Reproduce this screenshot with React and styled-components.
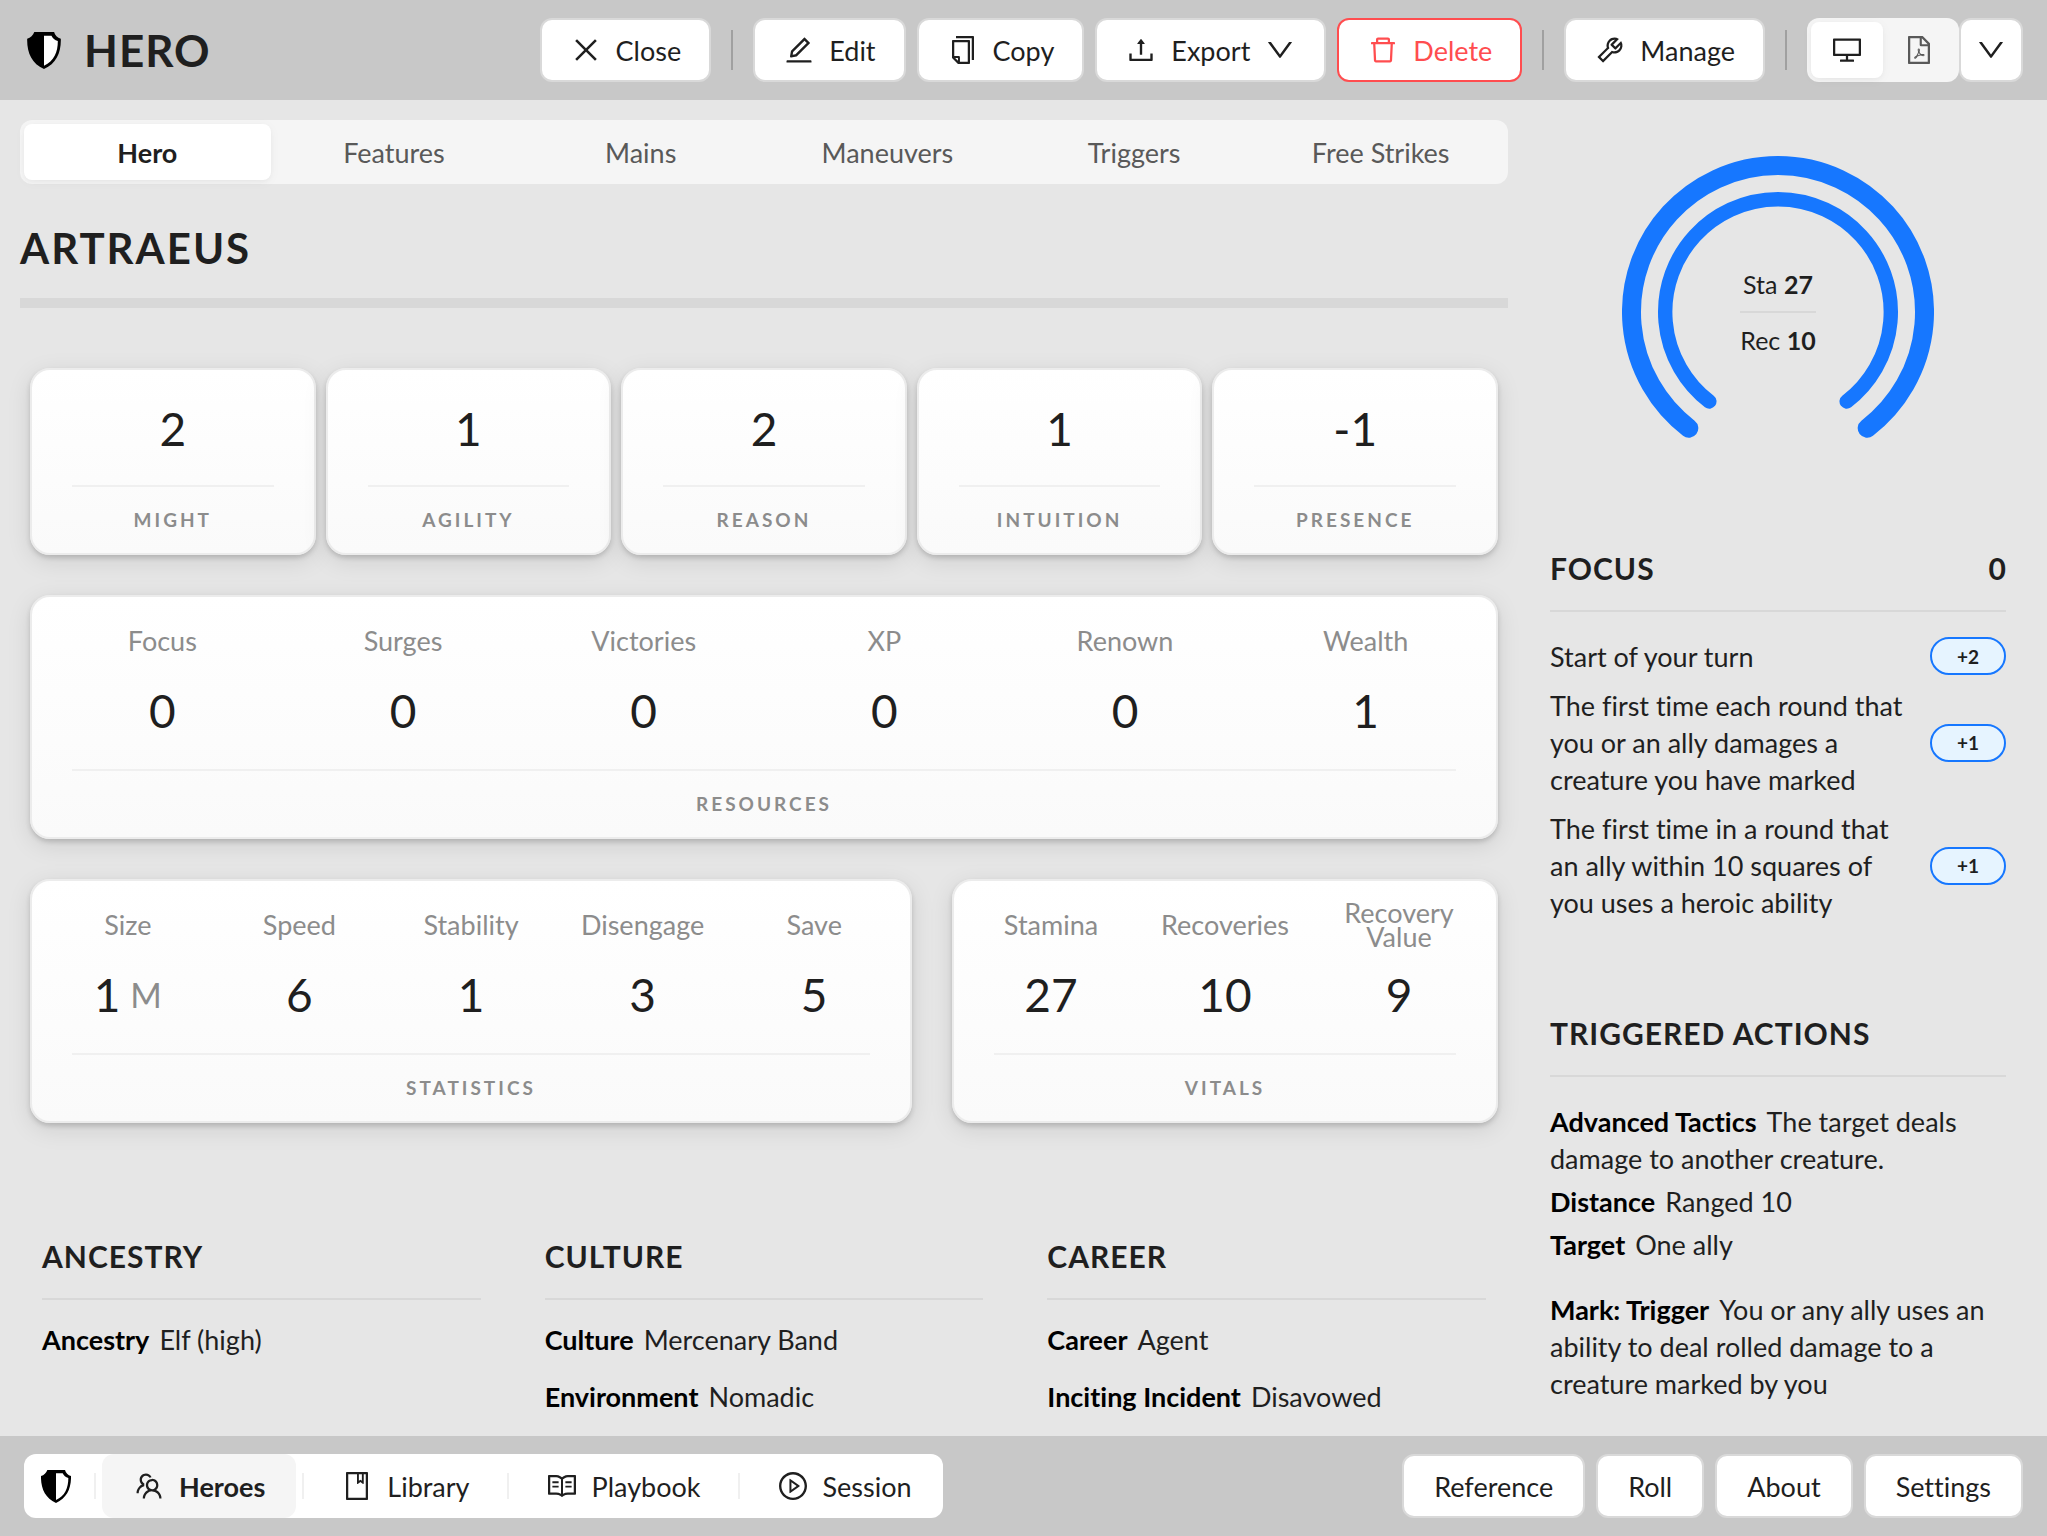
import React, { useState } from "react";
import styled, { createGlobalStyle, css } from "styled-components";
import {
  AiOutlineBook,
  AiOutlineClose,
  AiOutlineCopy,
  AiOutlineDelete,
  AiOutlineDesktop,
  AiOutlineDown,
  AiOutlineEdit,
  AiOutlineFilePdf,
  AiOutlinePlayCircle,
  AiOutlineRead,
  AiOutlineTeam,
  AiOutlineTool,
  AiOutlineUpload,
} from "react-icons/ai";

const ink = "#1f1f1f";
const muted = "#8c8c8c";
const rule = "#d8d8d8";
const accent = "#1677ff";
const danger = "#ff4d4f";

const GlobalStyle = createGlobalStyle`
  *, *::before, *::after { box-sizing: border-box; }
  body {
    margin: 0;
    background: #e6e6e6;
    color: ${ink};
    font: 400 27px/37px Lato, "Open Sans", sans-serif;
    font-variant-ligatures: none;
  }
  button {
    font: inherit;
    font-variant-ligatures: none;
    color: inherit;
    cursor: pointer;
    margin: 0;
  }
  h1, h2, h3, p, dl, dd, ul { margin: 0; padding: 0; }
  svg { display: block; flex: none; }
  button > svg[fill="currentColor"] { width: 32px; height: 32px; }
`;

const Page = styled.div`
  display: flex;
  flex-direction: column;
  height: 100vh;
`;

const Bar = styled.header`
  flex: none;
  display: flex;
  align-items: center;
  justify-content: space-between;
  height: 100px;
  padding: 0 24px;
  background: #c8c8c8;
`;

const Brand = styled.div`
  display: flex;
  align-items: center;
  gap: 23px;
  padding-left: 3px;
`;

const BrandTitle = styled.h1`
  font-size: 44px;
  line-height: 64px;
  font-weight: 700;
  letter-spacing: 1px;
`;

const Tools = styled.div`
  display: flex;
  align-items: center;
  gap: 11px;
`;

const buttonPadding = { icon: 28, text: 30, compact: 14 };

const Button = styled.button`
  display: flex;
  align-items: center;
  justify-content: center;
  gap: 14px;
  height: 64px;
  padding: 0 ${(p) => buttonPadding[p.$kind || "icon"]}px;
  border: 2px solid ${(p) => (p.$danger ? danger : "#d9d9d9")};
  border-radius: 12px;
  background: #fff;
  color: ${(p) => (p.$danger ? danger : ink)};
`;

const ToolDivider = styled.span`
  width: 2px;
  height: 40px;
  margin: 0 9px;
  background: #a0a0a0;
`;

const ViewSwitch = styled.div`
  display: flex;
  align-items: center;
`;

const Segments = styled.div`
  display: flex;
  padding: 4px;
  border-radius: 12px;
  background: #f5f5f5;
`;

const Segment = styled.button`
  flex: 1 1 0;
  display: flex;
  align-items: center;
  justify-content: center;
  height: 56px;
  padding: 0 20px;
  border: 0;
  border-radius: 8px;
  background: transparent;
  color: #595959;
  ${(p) =>
    p.$active &&
    css`
      background: #fff;
      color: ${ink};
      font-weight: 700;
      box-shadow: 0 2px 4px rgba(0, 0, 0, 0.03), 0 2px 12px rgba(0, 0, 0, 0.04);
    `}
`;

const Body = styled.main`
  flex: 1 1 0;
  min-height: 0;
  overflow: auto;
  display: grid;
  grid-template-columns: minmax(0, 1fr) 456px;
  gap: 42px;
  padding: 20px 41px 0 20px;
`;

const Sheet = styled.div`
  display: flex;
  flex-direction: column;
`;

const HeroName = styled.h2`
  margin-top: 32px;
  padding-bottom: 18px;
  border-bottom: 10px solid ${rule};
  font-size: 42px;
  line-height: 64px;
  font-weight: 700;
  letter-spacing: 2px;
`;

const Cards = styled.div`
  display: flex;
  flex-direction: column;
  gap: 40px;
  padding: 60px 10px 0;
`;

const CardRow = styled.div`
  display: grid;
  grid-template-columns: ${(p) => p.$columns};
  gap: ${(p) => p.$gap}px;
`;

const Card = styled.section`
  display: flex;
  flex-direction: column;
  padding: 12px 10px 21px;
  border: 2px solid #ececec;
  border-radius: 20px;
  background: linear-gradient(180deg, #fff, #fafafa);
  box-shadow: 0 3px 5px rgba(0, 0, 0, 0.16), 0 6px 24px rgba(0, 0, 0, 0.1);
`;

const Characteristic = styled.div`
  padding-top: 9px;
  text-align: center;
`;

const StatList = styled.dl`
  display: grid;
  grid-auto-flow: column;
  grid-auto-columns: minmax(0, 1fr);
  padding-bottom: 2px;
  text-align: center;
`;

const StatLabel = styled.dt`
  display: flex;
  align-items: center;
  justify-content: center;
  height: 64px;
  line-height: 24px;
  color: ${muted};
`;

const StatValue = styled.dd`
  display: flex;
  align-items: center;
  justify-content: center;
  gap: 10px;
  height: 74px;
  font-size: 46px;
`;

const SizeMod = styled.span`
  font-size: 34px;
  color: ${muted};
`;

const CardCaption = styled.h3`
  margin: 20px 30px 0;
  padding-top: 21px;
  border-top: 2px solid #f0f0f0;
  color: ${muted};
  font-size: 19px;
  line-height: 24px;
  font-weight: 700;
  letter-spacing: 3px;
  text-align: center;
`;

const Details = styled.div`
  display: grid;
  grid-template-columns: repeat(3, minmax(0, 1fr));
  gap: 64px;
  padding: 113px 22px 0;
`;

const SectionTitle = styled.h3`
  display: flex;
  justify-content: space-between;
  padding-bottom: 22px;
  border-bottom: 2px solid ${rule};
  font-size: 30px;
  line-height: 40px;
  font-weight: 700;
  letter-spacing: 1px;
`;

const Points = styled.span`
  letter-spacing: 0;
`;

const Fields = styled.div`
  display: flex;
  flex-direction: column;
  gap: ${(p) => p.$gap}px;
  padding-top: ${(p) => p.$top}px;
`;

const Term = styled.strong`
  margin-right: 10px;
  color: #000;
  font-weight: 700;
`;

const Sidebar = styled.aside`
  display: flex;
  flex-direction: column;
`;

const Gauge = styled.div`
  display: grid;
  place-items: center;
  padding-top: 36px;
  > * { grid-area: 1 / 1; }
`;

const GaugeText = styled.div`
  display: flex;
  flex-direction: column;
  font-size: 25px;
  line-height: 36px;
  text-align: center;
  p + p {
    margin-top: 9px;
    padding-top: 9px;
    border-top: 2px solid ${rule};
  }
`;

const SideSection = styled.section`
  padding-top: ${(p) => p.$top}px;
`;

const Gains = styled.ul`
  display: flex;
  flex-direction: column;
  gap: 12px;
  padding-top: 25px;
  list-style: none;
`;

const Gain = styled.li`
  display: flex;
  align-items: center;
  justify-content: space-between;
  gap: 20px;
`;

const GainButton = styled.button`
  flex: none;
  display: flex;
  align-items: center;
  justify-content: center;
  width: 76px;
  height: 38px;
  padding: 0;
  border: 2px solid ${accent};
  border-radius: 19px;
  background: #e6f4ff;
  && {
    font-size: 19px;
    font-weight: 700;
  }
`;

const Nav = styled.nav`
  display: flex;
  align-items: center;
  height: 64px;
  border-radius: 12px;
  background: #fff;
`;

const NavHome = styled.button`
  display: flex;
  align-items: center;
  height: 64px;
  padding: 0 17px;
  border: 0;
  background: transparent;
`;

const NavItem = styled.button`
  display: flex;
  align-items: center;
  gap: 14px;
  height: 64px;
  padding: 0 31px;
  border: 0;
  border-radius: 12px;
  background: ${(p) => (p.$active ? "#f5f5f5" : "transparent")};
  && {
    font-weight: ${(p) => (p.$active ? 700 : 400)};
  }
`;

const NavDivider = styled.span`
  width: 2px;
  height: 26px;
  margin: 0 6px;
  background: #f0f0f0;
`;

const Shield = ({ size }) => (
  <svg width={size} height={Math.round(size * 1.1)} viewBox="0 0 90 99" aria-hidden="true">
    <path
      d="M19 0H72C74 9 81 16 90 18C91 55 78 84 45 99C12 84 -1 55 0 18C9 16 16 9 19 0Z"
      fill="#000"
    />
    <path d="M45 10H65C68 17 74 22 82 24C82 54 72 78 45 90Z" fill="#fff" />
  </svg>
);

const arc = (r) => {
  const a = (37.5 * Math.PI) / 180;
  const dx = r * Math.sin(a);
  const dy = r * Math.cos(a);
  return `M${156 - dx} ${156 + dy}A${r} ${r} 0 1 1 ${156 + dx} ${156 + dy}`;
};

const Rings = () => (
  <svg width="312" height="312" viewBox="0 0 312 312" fill="none" stroke={accent} strokeLinecap="round" aria-hidden="true">
    <path d={arc(146.5)} strokeWidth="19" />
    <path d={arc(112.8)} strokeWidth="14.4" />
  </svg>
);

const tabs = ["Hero", "Features", "Mains", "Maneuvers", "Triggers", "Free Strikes"];

const characteristics = [
  ["MIGHT", "2"],
  ["AGILITY", "1"],
  ["REASON", "2"],
  ["INTUITION", "1"],
  ["PRESENCE", "-1"],
];

const resources = [
  ["Focus", "0"],
  ["Surges", "0"],
  ["Victories", "0"],
  ["XP", "0"],
  ["Renown", "0"],
  ["Wealth", "1"],
];

const statistics = [
  ["Size", "1", "M"],
  ["Speed", "6"],
  ["Stability", "1"],
  ["Disengage", "3"],
  ["Save", "5"],
];

const vitals = [
  ["Stamina", "27"],
  ["Recoveries", "10"],
  ["Recovery Value", "9"],
];

const details = [
  ["ANCESTRY", [["Ancestry", "Elf (high)"]]],
  ["CULTURE", [["Culture", "Mercenary Band"], ["Environment", "Nomadic"]]],
  ["CAREER", [["Career", "Agent"], ["Inciting Incident", "Disavowed"]]],
];

const gains = [
  ["Start of your turn", "+2"],
  ["The first time each round that you or an ally damages a creature you have marked", "+1"],
  ["The first time in a round that an ally within 10 squares of you uses a heroic ability", "+1"],
];

const StatCard = ({ caption, stats }) => (
  <Card>
    <StatList>
      {stats.map(([label, value, mod]) => (
        <div key={label}>
          <StatLabel>{label}</StatLabel>
          <StatValue>
            {value}
            {mod && <SizeMod>{mod}</SizeMod>}
          </StatValue>
        </div>
      ))}
    </StatList>
    <CardCaption>{caption}</CardCaption>
  </Card>
);

const Field = ({ term, children }) => (
  <p>
    <Term>{term}</Term>
    {children}
  </p>
);

export default function App() {
  const [tab, setTab] = useState("Hero");
  const [view, setView] = useState("screen");

  return (
    <Page>
      <GlobalStyle />
      <Bar>
        <Brand>
          <Shield size={34} />
          <BrandTitle>HERO</BrandTitle>
        </Brand>
        <Tools>
          <Button><AiOutlineClose />Close</Button>
          <ToolDivider />
          <Button><AiOutlineEdit />Edit</Button>
          <Button><AiOutlineCopy />Copy</Button>
          <Button><AiOutlineUpload />Export<AiOutlineDown /></Button>
          <Button $danger><AiOutlineDelete />Delete</Button>
          <ToolDivider />
          <Button><AiOutlineTool />Manage</Button>
          <ToolDivider />
          <ViewSwitch>
            <Segments>
              <Segment $active={view === "screen"} aria-label="Screen view" onClick={() => setView("screen")}>
                <AiOutlineDesktop />
              </Segment>
              <Segment $active={view === "pdf"} aria-label="PDF view" onClick={() => setView("pdf")}>
                <AiOutlineFilePdf />
              </Segment>
            </Segments>
            <Button $kind="compact" aria-label="View options"><AiOutlineDown /></Button>
          </ViewSwitch>
        </Tools>
      </Bar>

      <Body>
        <Sheet>
          <Segments role="tablist">
            {tabs.map((name) => (
              <Segment key={name} role="tab" aria-selected={tab === name} $active={tab === name} onClick={() => setTab(name)}>
                {name}
              </Segment>
            ))}
          </Segments>
          <HeroName>ARTRAEUS</HeroName>
          <Cards>
            <CardRow $columns="repeat(5, minmax(0, 1fr))" $gap={10}>
              {characteristics.map(([label, value]) => (
                <Card key={label}>
                  <Characteristic>
                    <StatValue as="div">{value}</StatValue>
                  </Characteristic>
                  <CardCaption>{label}</CardCaption>
                </Card>
              ))}
            </CardRow>
            <StatCard caption="RESOURCES" stats={resources} />
            <CardRow $columns="21fr 13fr" $gap={40}>
              <StatCard caption="STATISTICS" stats={statistics} />
              <StatCard caption="VITALS" stats={vitals} />
            </CardRow>
          </Cards>
          <Details>
            {details.map(([title, fields]) => (
              <section key={title}>
                <SectionTitle>{title}</SectionTitle>
                <Fields $gap={20} $top={21}>
                  {fields.map(([term, text]) => (
                    <Field key={term} term={term}>{text}</Field>
                  ))}
                </Fields>
              </section>
            ))}
          </Details>
        </Sheet>

        <Sidebar>
          <Gauge>
            <Rings />
            <GaugeText>
              <p>Sta <b>27</b></p>
              <p>Rec <b>10</b></p>
            </GaugeText>
          </Gauge>
          <SideSection $top={80}>
            <SectionTitle>FOCUS<Points>0</Points></SectionTitle>
            <Gains>
              {gains.map(([text, amount]) => (
                <Gain key={text}>
                  <span>{text}</span>
                  <GainButton>{amount}</GainButton>
                </Gain>
              ))}
            </Gains>
          </SideSection>
          <SideSection $top={92}>
            <SectionTitle>TRIGGERED ACTIONS</SectionTitle>
            <Fields $gap={6} $top={26}>
              <Field term="Advanced Tactics">The target deals damage to another creature.</Field>
              <Field term="Distance">Ranged 10</Field>
              <Field term="Target">One ally</Field>
            </Fields>
            <Fields $gap={6} $top={28}>
              <Field term="Mark: Trigger">You or any ally uses an ability to deal rolled damage to a creature marked by you</Field>
            </Fields>
          </SideSection>
        </Sidebar>
      </Body>

      <Bar as="footer">
        <Nav>
          <NavHome aria-label="Home"><Shield size={30} /></NavHome>
          <NavDivider />
          <NavItem $active><AiOutlineTeam />Heroes</NavItem>
          <NavDivider />
          <NavItem><AiOutlineBook />Library</NavItem>
          <NavDivider />
          <NavItem><AiOutlineRead />Playbook</NavItem>
          <NavDivider />
          <NavItem><AiOutlinePlayCircle />Session</NavItem>
        </Nav>
        <Tools>
          <Button $kind="text">Reference</Button>
          <Button $kind="text">Roll</Button>
          <Button $kind="text">About</Button>
          <Button $kind="text">Settings</Button>
        </Tools>
      </Bar>
    </Page>
  );
}
